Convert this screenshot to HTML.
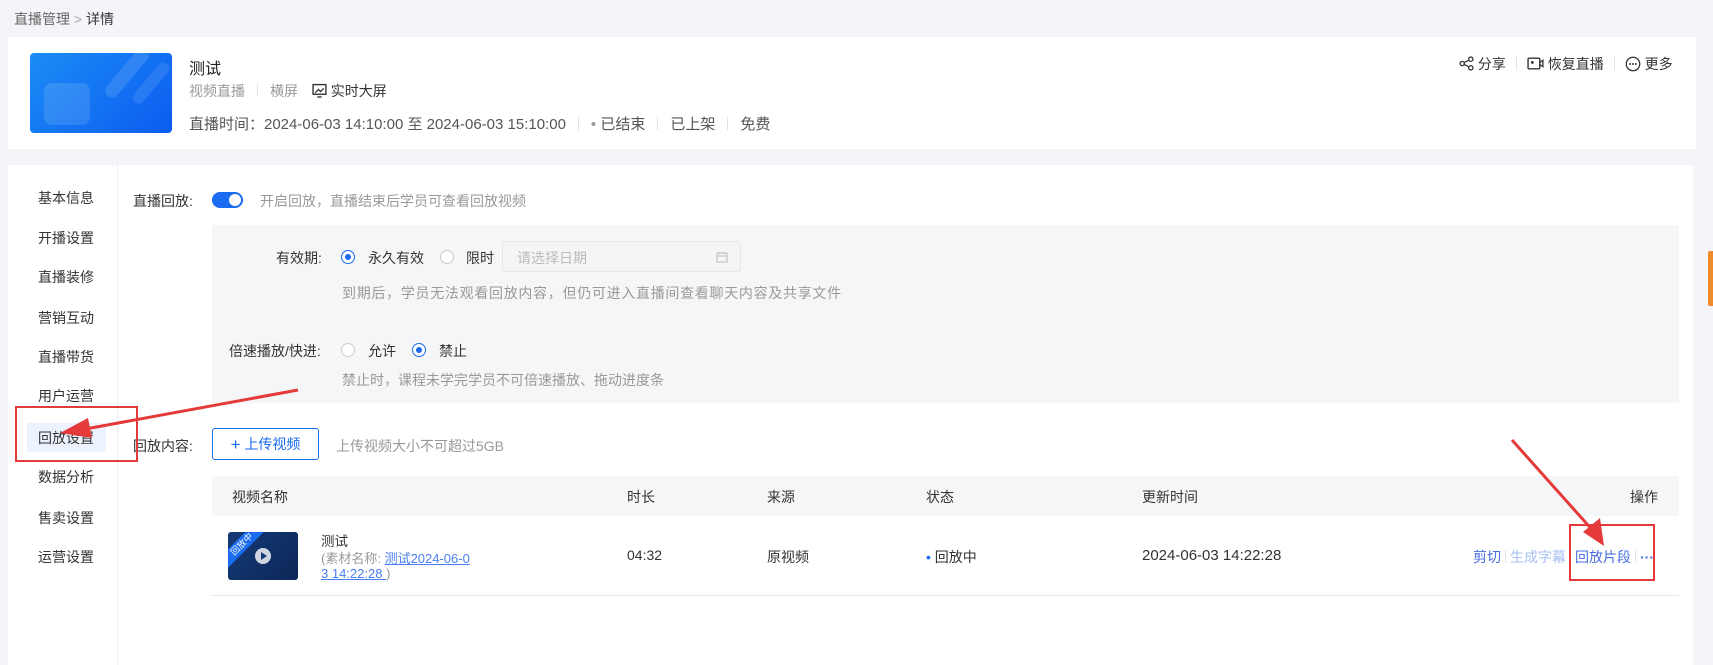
<!DOCTYPE html>
<html><head><meta charset="utf-8"><style>
*{margin:0;padding:0;box-sizing:border-box}
body{width:1713px;height:661px;background:#f4f5f9;font-family:"Liberation Sans","Noto Sans CJK SC",sans-serif;font-size:14px;color:#333;position:relative;overflow:hidden}
.a{position:absolute;white-space:nowrap}
.g{color:#999}
.sep{display:inline-block;width:1px;height:13px;background:#e3e3e3;margin:0 12px;vertical-align:-1px}
.radio{position:absolute;width:14px;height:14px;border-radius:50%;border:1px solid #ccc;background:#fff}
.radio.on{border-color:#1a6bf0}
.radio.on::after{content:"";position:absolute;left:3px;top:3px;width:6px;height:6px;border-radius:50%;background:#1a6bf0}
.nav{position:absolute;left:38px;font-size:14px;color:#333}
.t{font-size:14px}
</style></head><body>
<div class="a" style="left:14px;top:9px;font-size:14px;color:#666">直播管理 <span style="color:#aaa">&gt;</span> <span style="color:#333">详情</span></div>

<div class="a" style="left:8px;top:37px;width:1688px;height:112px;background:#fff"></div>
<div class="a" style="left:30px;top:53px;width:142px;height:80px;border-radius:4px;background:linear-gradient(135deg,#1b8cf5,#0c5cf0);overflow:hidden">
<div style="position:absolute;left:14px;top:30px;width:46px;height:42px;border-radius:8px;background:rgba(255,255,255,.12)"></div>
<div style="position:absolute;left:90px;top:-10px;width:14px;height:60px;border-radius:7px;background:rgba(255,255,255,.12);transform:rotate(40deg)"></div>
<div style="position:absolute;left:115px;top:5px;width:12px;height:50px;border-radius:6px;background:rgba(255,255,255,.1);transform:rotate(40deg)"></div>
</div>
<div class="a" style="left:189px;top:55px;font-size:16px;color:#222">测试</div>
<div class="a" style="left:189px;top:81px;font-size:14px"><span class="g">视频直播</span><span class="sep"></span><span class="g">横屏</span>
<svg width="15" height="15" viewBox="0 0 14 14" style="vertical-align:-2px;margin-left:10px"><rect x="1" y="1.5" width="12" height="9" fill="none" stroke="#333" stroke-width="1.3"/><path d="M3 9l3-3 2 2 3-3M5 13h4" stroke="#333" fill="none" stroke-width="1.2"/></svg> <span style="color:#333">实时大屏</span></div>
<div class="a" style="left:189px;top:113px;font-size:15px;color:#555">直播时间：2024-06-03 14:10:00 至 2024-06-03 15:10:00<span class="sep"></span><span class="g">• </span>已结束<span class="sep"></span>已上架<span class="sep"></span>免费</div>

<div class="a" style="left:1459px;top:54px;font-size:14px;color:#333">
<svg width="15" height="15" viewBox="0 0 14 14" style="vertical-align:-2px"><circle cx="3" cy="7" r="2" fill="none" stroke="#333" stroke-width="1.2"/><circle cx="11" cy="3" r="2" fill="none" stroke="#333" stroke-width="1.2"/><circle cx="11" cy="11" r="2" fill="none" stroke="#333" stroke-width="1.2"/><path d="M5 6l4-2M5 8l4 2" stroke="#333" stroke-width="1.2"/></svg> 分享<span class="sep" style="margin:0 10px"></span><svg width="17" height="15" viewBox="0 0 16 14" style="vertical-align:-2px"><rect x="1" y="2" width="11" height="10" rx="1" fill="none" stroke="#333" stroke-width="1.3"/><path d="M12 6l3-2v6l-3-2" fill="none" stroke="#333" stroke-width="1.2"/><circle cx="5" cy="6" r="1.3" fill="#333"/></svg> 恢复直播<span class="sep" style="margin:0 10px"></span><svg width="16" height="16" viewBox="0 0 15 15" style="vertical-align:-3px"><circle cx="7.5" cy="7.5" r="6.3" fill="none" stroke="#333" stroke-width="1.2"/><circle cx="4.8" cy="7.5" r=".9" fill="#333"/><circle cx="7.5" cy="7.5" r=".9" fill="#333"/><circle cx="10.2" cy="7.5" r=".9" fill="#333"/></svg> 更多</div>

<div class="a" style="left:8px;top:165px;width:1685px;height:500px;background:#fff"></div>
<div class="a" style="left:117px;top:165px;width:1px;height:500px;background:#eee"></div>
<div class="a" style="left:27px;top:423px;width:79px;height:29px;background:#edf3fe;border-radius:2px"></div>
<div class="nav" style="top:188px">基本信息</div>
<div class="nav" style="top:228px">开播设置</div>
<div class="nav" style="top:267px">直播装修</div>
<div class="nav" style="top:308px">营销互动</div>
<div class="nav" style="top:347px">直播带货</div>
<div class="nav" style="top:386px">用户运营</div>
<div class="nav" style="top:428px">回放设置</div>
<div class="nav" style="top:467px">数据分析</div>
<div class="nav" style="top:508px">售卖设置</div>
<div class="nav" style="top:547px">运营设置</div>

<div class="a t" style="left:133px;top:191px">直播回放:</div>
<div class="a" style="left:212px;top:192px;width:31px;height:16px;border-radius:8px;background:#1a6bf0"><div style="position:absolute;right:2px;top:2px;width:12px;height:12px;border-radius:50%;background:#fff"></div></div>
<div class="a g t" style="left:260px;top:191px">开启回放，直播结束后学员可查看回放视频</div>

<div class="a" style="left:212px;top:225px;width:1467px;height:178px;background:#f5f6f8"></div>
<div class="a t" style="left:276px;top:248px">有效期:</div>
<div class="radio on" style="left:341px;top:250px"></div>
<div class="a t" style="left:368px;top:248px">永久有效</div>
<div class="radio" style="left:440px;top:250px"></div>
<div class="a t" style="left:466px;top:248px">限时</div>
<div class="a" style="left:502px;top:241px;width:239px;height:31px;border:1px solid #e6e6e6;border-radius:3px;background:#f5f5f5"><span style="position:absolute;left:14px;top:6px;font-size:14px;color:#bbb">请选择日期</span><svg width="12" height="12" viewBox="0 0 12 12" style="position:absolute;right:12px;top:9px"><rect x="1" y="2" width="10" height="9" fill="none" stroke="#bbb"/><path d="M1 5h10M4 1v2M8 1v2" stroke="#bbb"/></svg></div>
<div class="a g t" style="left:342px;top:283px;letter-spacing:.7px">到期后，学员无法观看回放内容，但仍可进入直播间查看聊天内容及共享文件</div>
<div class="a t" style="left:229px;top:341px">倍速播放/快进:</div>
<div class="radio" style="left:341px;top:343px"></div>
<div class="a t" style="left:368px;top:341px">允许</div>
<div class="radio on" style="left:412px;top:343px"></div>
<div class="a t" style="left:439px;top:341px">禁止</div>
<div class="a g t" style="left:342px;top:370px">禁止时，课程未学完学员不可倍速播放、拖动进度条</div>

<div class="a t" style="left:133px;top:436px">回放内容:</div>
<div class="a" style="left:212px;top:428px;width:107px;height:32px;border:1px solid #1a6bf0;border-radius:3px;color:#1a6bf0;font-size:14px;text-align:center;line-height:30px"><span style="font-size:17px;vertical-align:-1px">+</span> 上传视频</div>
<div class="a g t" style="left:336px;top:436px">上传视频大小不可超过5GB</div>

<div class="a" style="left:212px;top:476px;width:1467px;height:40px;background:#f5f6f8"></div>
<div class="a t" style="left:232px;top:487px">视频名称</div>
<div class="a t" style="left:627px;top:487px">时长</div>
<div class="a t" style="left:767px;top:487px">来源</div>
<div class="a t" style="left:926px;top:487px">状态</div>
<div class="a t" style="left:1142px;top:487px">更新时间</div>
<div class="a t" style="left:1630px;top:487px">操作</div>
<div class="a" style="left:212px;top:595px;width:1467px;height:1px;background:#e8e8e8"></div>

<div class="a" style="left:228px;top:532px;width:70px;height:48px;border-radius:3px;background:linear-gradient(135deg,#143a78,#0c2757);overflow:hidden">
<div style="position:absolute;left:-16px;top:6px;width:60px;height:13px;background:#1a6bf0;transform:rotate(-45deg);color:#fff;font-size:9px;text-align:center;line-height:13px">回放中</div>
<div style="position:absolute;left:27px;top:16px;width:16px;height:16px;border-radius:50%;background:#cfd6e2"><div style="position:absolute;left:6px;top:4px;border-left:6px solid #143a78;border-top:4px solid transparent;border-bottom:4px solid transparent"></div></div></div>
<div class="a" style="left:321px;top:530px;font-size:13.5px">测试</div>
<div class="a g" style="left:321px;top:548px;font-size:13px">(素材名称: <span style="color:#4a7ef0;text-decoration:underline">测试2024-06-0</span></div>
<div class="a" style="left:321px;top:566px;font-size:13px;color:#4a7ef0"><span style="text-decoration:underline">3 14:22:28 </span><span class="g">)</span></div>
<div class="a t" style="left:627px;top:547px">04:32</div>
<div class="a t" style="left:767px;top:547px">原视频</div>
<div class="a t" style="left:926px;top:547px"><span style="color:#1a6bf0">•</span> 回放中</div>
<div class="a" style="left:1142px;top:547px;font-size:15px">2024-06-03 14:22:28</div>
<div class="a" style="left:1473px;top:547px;font-size:14px;color:#4a6ee0">剪切<span class="sep" style="margin:0 4px"></span><span style="color:#a8c0f4">生成字幕</span><span class="sep" style="margin:0 4px"></span>回放片段<span class="sep" style="margin:0 4px"></span><b>···</b></div>

<div class="a" style="left:1708px;top:251px;width:5px;height:55px;background:#f08a2c;border-radius:2px 0 0 2px"></div>

<div class="a" style="left:15px;top:406px;width:123px;height:56px;border:2px solid #e53a3a"></div>
<div class="a" style="left:1569px;top:524px;width:86px;height:57px;border:2px solid #e53a3a"></div>
<svg class="a" style="left:0;top:0" width="1713" height="661">
<path d="M298 390 L80 430" stroke="#e53a3a" stroke-width="3"/>
<polygon points="60,433 88,418 92,438" fill="#e53a3a"/>
<path d="M1512 440 L1595 533" stroke="#e53a3a" stroke-width="3"/>
<polygon points="1604,546 1583,532 1600,518" fill="#e53a3a"/>
</svg>
</body></html>
